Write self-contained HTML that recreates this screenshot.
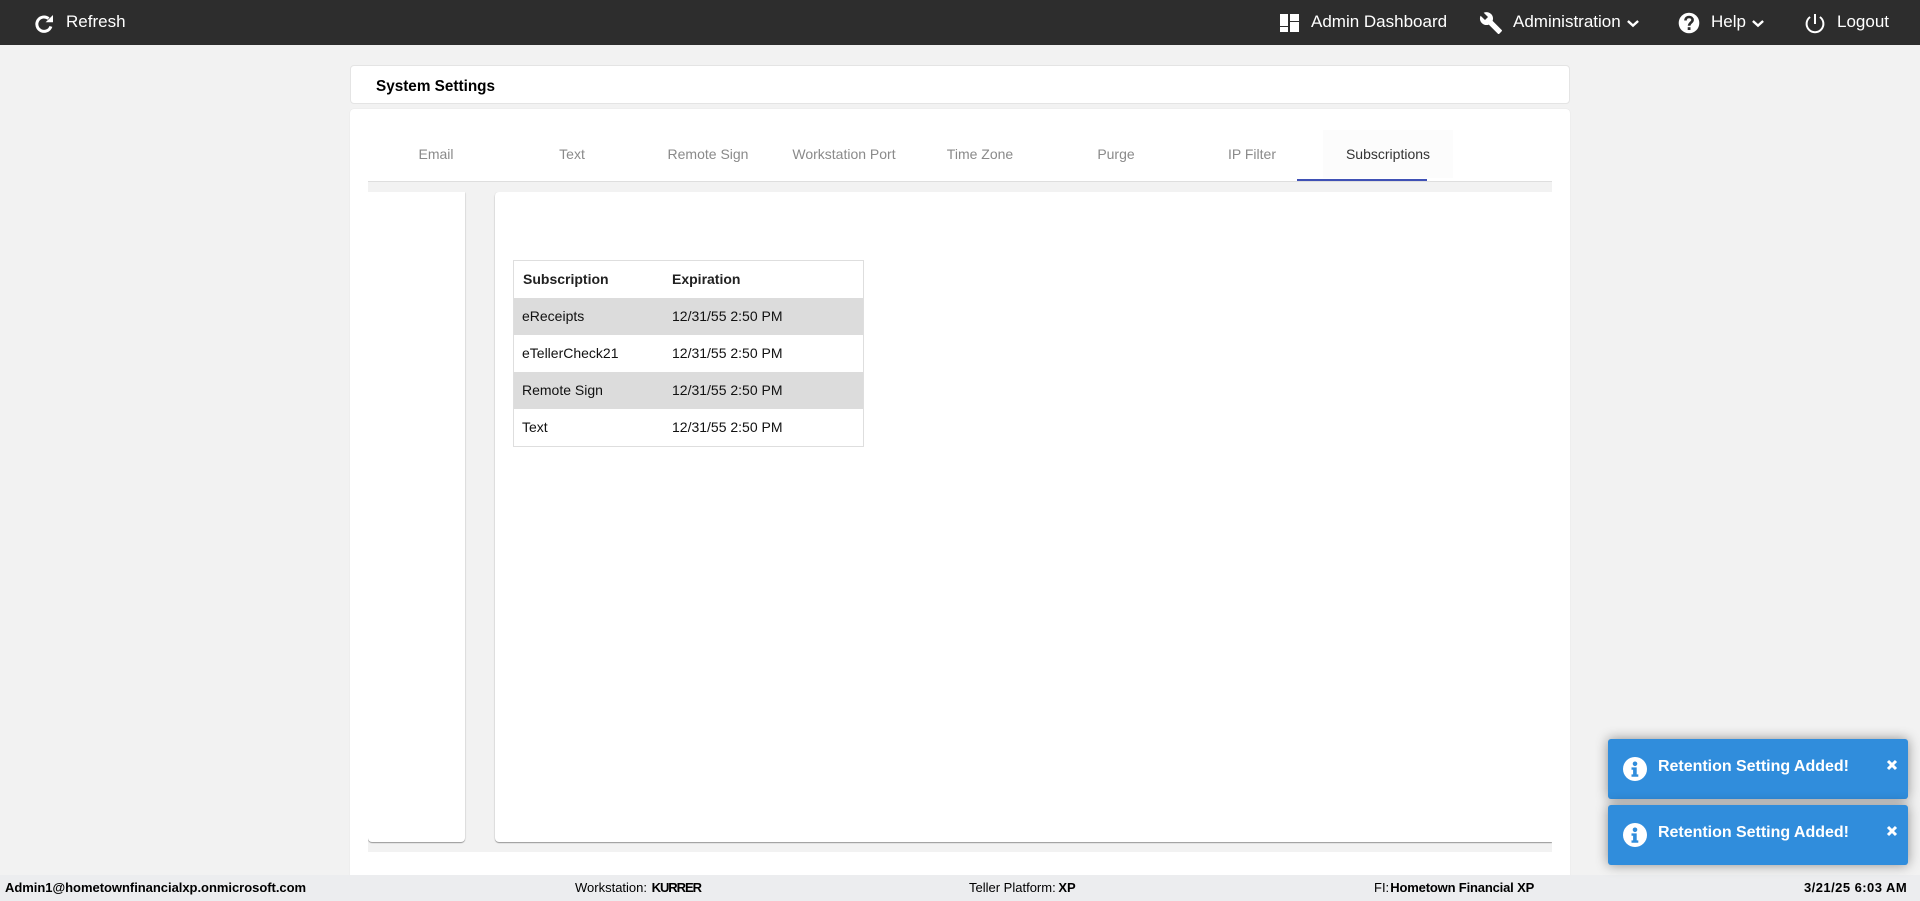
<!DOCTYPE html>
<html lang="en">
<head>
<meta charset="utf-8">
<title>System Settings</title>
<style>
html,body{margin:0;padding:0;width:1920px;height:901px;overflow:hidden;background:#f2f2f2;font-family:"Liberation Sans",Arial,sans-serif;color:#000}
.a{position:absolute;white-space:nowrap}
#nav{left:0;top:0;width:1920px;height:45px;background:#2d2d2d}
.n{color:#fff;font-size:17px;line-height:20px;top:12px}
svg{position:absolute;display:block;overflow:visible}
.tab{top:144px;width:136px;text-align:center;font-size:14px;line-height:20px;color:#8a8a8a}
.panel{background:#fff;top:0;height:650px;box-shadow:0 1px 1px rgba(0,0,0,.36),0 0 2px rgba(0,0,0,.08);border-radius:0 0 4px 4px}
.th,.td{font-size:14px;line-height:20px}
.th{font-weight:bold;color:#212121}
.td{color:#111}
.row{left:514px;width:349px;height:37px}
.toast{left:1608px;width:300px;height:60px;background:#308ddc;border-radius:3px;box-shadow:0 0 12px rgba(0,0,0,.42)}
.tt{left:50px;top:18px;color:#fff;font-weight:bold;font-size:16px;line-height:20px;letter-spacing:-.02px}
.f{top:880px;font-size:13px;line-height:16px;color:#000}
</style>
</head>
<body>
<div id="nav" class="a"></div>

<svg style="left:34px;top:12.5px" width="21" height="21" viewBox="0 0 21 21" fill="none">
  <path d="M16.9 13.4A7.2 7.2 0 1 1 14.6 5.6" stroke="#fff" stroke-width="3"/>
  <path d="M19 2V9.2H11.6Z" fill="#fff"/>
</svg>
<div class="a n" style="left:66px">Refresh</div>

<svg style="left:1280px;top:14px" width="19" height="18" viewBox="0 0 19 18" fill="#fff"><rect x="0" y="0" width="8" height="12"/><rect x="10" y="0" width="9" height="7"/><rect x="0" y="13" width="8" height="5"/><rect x="10" y="8" width="9" height="10"/></svg>
<div class="a n" style="left:1311px">Admin Dashboard</div>

<svg style="left:1479px;top:11px" width="24" height="24" viewBox="0 0 24 24" fill="#fff"><path d="M22.7,19L13.6,9.9C14.5,7.6 14,4.9 12.1,3C10.1,1 7.1,0.6 4.7,1.7L9,6L6,9L1.6,4.7C0.4,7.1 0.9,10.1 2.9,12.1C4.8,14 7.5,14.5 9.8,13.6L18.9,22.7C19.3,23.1 19.9,23.1 20.3,22.7L22.6,20.4C23.1,20 23.1,19.3 22.7,19Z"/></svg>
<div class="a n" style="left:1513px">Administration</div>
<svg style="left:1627.3px;top:19.5px" width="12" height="7" viewBox="0 0 12 7" fill="none" stroke="#fff" stroke-width="2.4"><path d="M.9 1L6 5.6L11.1 1"/></svg>

<svg style="left:1677px;top:11.3px" width="24" height="24" viewBox="0 0 24 24">
  <circle cx="12" cy="12" r="10.3" fill="#fff"/>
  <path d="M8.5 9.5C8.5 7.2 10.2 6 12.1 6C14.1 6 15.6 7.2 15.6 9C15.6 11.4 12.1 11.8 12.1 14.8" fill="none" stroke="#2d2d2d" stroke-width="2.6"/>
  <rect x="10.7" y="16.2" width="2.8" height="2.8" fill="#2d2d2d"/>
</svg>
<div class="a n" style="left:1711px">Help</div>
<svg style="left:1752px;top:19.5px" width="12" height="7" viewBox="0 0 12 7" fill="none" stroke="#fff" stroke-width="2.4"><path d="M.9 1L6 5.6L11.1 1"/></svg>

<svg style="left:1802.5px;top:12px" width="24" height="22" viewBox="0 0 24 22" fill="none" stroke="#fff" stroke-width="2">
  <path d="M7.1 5A8.4 8.4 0 1 0 16.9 5"/>
  <path d="M12 2V12"/>
</svg>
<div class="a n" style="left:1837px">Logout</div>

<div class="a" style="left:350px;top:65px;width:1220px;height:39px;box-sizing:border-box;background:#fff;border:1px solid #e4e4e4;border-radius:4px"></div>
<div class="a" style="left:376px;top:77px;font-size:15.3px;line-height:20px;font-weight:bold">System Settings</div>

<div class="a" style="left:350px;top:109px;width:1220px;height:770px;background:#fff;border-radius:4px;box-shadow:0 0 1px rgba(0,0,0,.12)"></div>

<div class="a" style="left:1323px;top:130px;width:130px;height:48px;background:#fcfcfc"></div>
<div class="a tab" style="left:368px">Email</div>
<div class="a tab" style="left:504px">Text</div>
<div class="a tab" style="left:640px">Remote Sign</div>
<div class="a tab" style="left:776px">Workstation Port</div>
<div class="a tab" style="left:912px">Time Zone</div>
<div class="a tab" style="left:1048px">Purge</div>
<div class="a tab" style="left:1184px">IP Filter</div>
<div class="a tab" style="left:1320px;color:#333">Subscriptions</div>

<div class="a" style="left:368px;top:181px;width:1184px;height:671px;background:#f2f2f2;border-top:1px solid #dedede;box-sizing:border-box"></div>
<div class="a" style="left:1297px;top:179px;width:130px;height:2px;background:#3f51b5"></div>

<div class="a" style="left:368px;top:192px;width:1184px;height:660px;overflow:hidden">
  <div class="a panel" style="left:0;width:97px"></div>
  <div class="a panel" style="left:127px;width:1057px;border-radius:4px 0 0 4px"></div>
</div>

<div class="a" style="left:513px;top:260px;width:351px;height:187px;border:1px solid #dedede;box-sizing:border-box;background:#fff"></div>
<div class="a row" style="top:298px;background:#dcdcdc"></div>
<div class="a row" style="top:372px;background:#dcdcdc"></div>

<div class="a th" style="left:523px;top:269px">Subscription</div>
<div class="a th" style="left:672px;top:269px">Expiration</div>
<div class="a td" style="left:522px;top:306px">eReceipts</div>
<div class="a td" style="left:672px;top:306px">12/31/55 2:50 PM</div>
<div class="a td" style="left:522px;top:343px">eTellerCheck21</div>
<div class="a td" style="left:672px;top:343px">12/31/55 2:50 PM</div>
<div class="a td" style="left:522px;top:380px">Remote Sign</div>
<div class="a td" style="left:672px;top:380px">12/31/55 2:50 PM</div>
<div class="a td" style="left:522px;top:417px">Text</div>
<div class="a td" style="left:672px;top:417px">12/31/55 2:50 PM</div>

<div class="a" style="left:0;top:875px;width:1920px;height:26px;background:#ecedef"></div>
<div class="a f" style="left:5px;font-weight:bold;letter-spacing:-.03px">Admin1@hometownfinancialxp.onmicrosoft.com</div>
<div class="a f" style="left:575px">Workstation: <b style="margin-left:1px;letter-spacing:-1.05px">KURRER</b></div>
<div class="a f" style="left:969px">Teller Platform: <b style="margin-left:-1px">XP</b></div>
<div class="a f" style="left:1374px">FI: <b style="margin-left:-2.5px;letter-spacing:-.17px">Hometown Financial XP</b></div>
<div class="a f" style="left:1804px;font-weight:bold;letter-spacing:.45px">3/21/25 6:03 AM</div>

<div class="a toast" style="top:739px">
  <svg style="left:15px;top:18px" width="24" height="24" viewBox="0 0 24 24"><circle cx="12" cy="12" r="12" fill="#fff"/><circle cx="12" cy="6.8" r="2.3" fill="#308ddc"/><path d="M8.5 10.4h5.2v7h1.6v2.4H8.5v-2.4h1.6v-4.6H8.5z" fill="#308ddc"/></svg>
  <div class="a tt">Retention Setting Added!</div>
  <svg style="left:279px;top:21px" width="10" height="10" viewBox="0 0 10 10" fill="none" stroke="#fff" stroke-width="3"><path d="M1 1L9 9M9 1L1 9"/></svg>
</div>
<div class="a toast" style="top:805px">
  <svg style="left:15px;top:18px" width="24" height="24" viewBox="0 0 24 24"><circle cx="12" cy="12" r="12" fill="#fff"/><circle cx="12" cy="6.8" r="2.3" fill="#308ddc"/><path d="M8.5 10.4h5.2v7h1.6v2.4H8.5v-2.4h1.6v-4.6H8.5z" fill="#308ddc"/></svg>
  <div class="a tt">Retention Setting Added!</div>
  <svg style="left:279px;top:21px" width="10" height="10" viewBox="0 0 10 10" fill="none" stroke="#fff" stroke-width="3"><path d="M1 1L9 9M9 1L1 9"/></svg>
</div>
</body>
</html>
